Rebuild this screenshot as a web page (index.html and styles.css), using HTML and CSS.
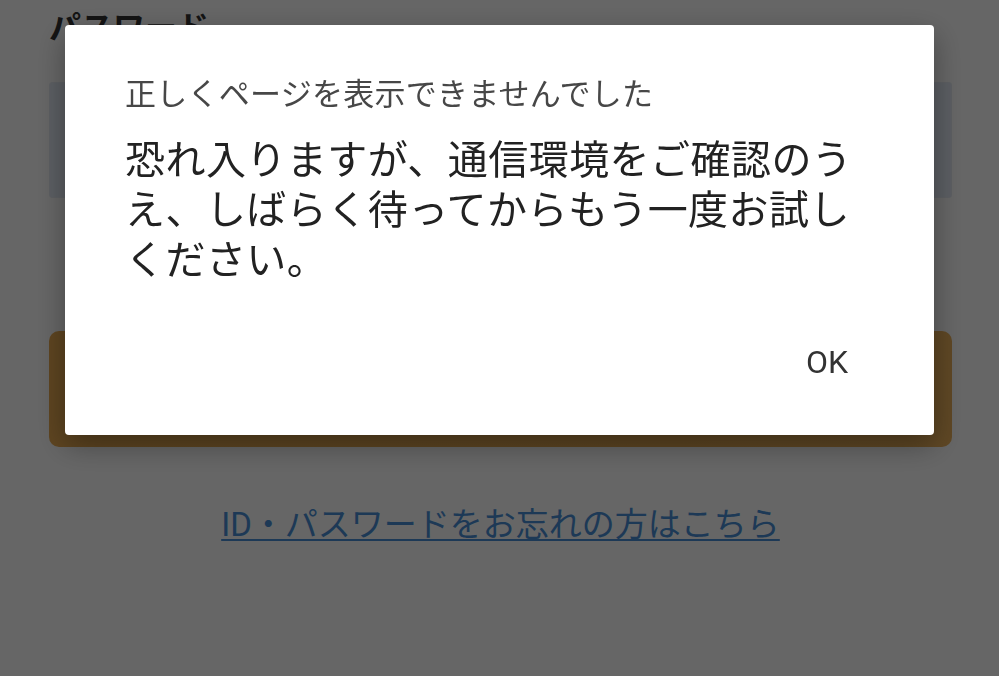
FILE: index.html
```html
<!DOCTYPE html>
<html lang="ja">
<head>
<meta charset="utf-8">
<title>ログイン</title>
<link rel="stylesheet" href="styles.css">
</head>
<body>
<main class="page">
  <h2 class="field-label">パスワード</h2>
  <div class="input-box"></div>
  <button class="login-btn" type="button"></button>
  <p class="forgot"><a href="#" class="forgot-link">ID・パスワードをお忘れの方はこちら</a></p>
</main>

<div class="scrim">
  <div class="dialog" role="alertdialog">
    <h1 class="dialog-title">正しくページを表示できませんでした</h1>
    <p class="dialog-message">恐れ入りますが、通信環境をご確認のうえ、しばらく待ってからもう一度お試しください。</p>
    <div class="dialog-actions">
      <button class="dialog-ok" type="button">OK</button>
    </div>
  </div>
</div>
</body>
</html>
```

FILE: styles.css
```css
html, body {
  margin: 0;
  padding: 0;
  background: #ffffff;
  font-family: "Noto Sans CJK JP", sans-serif;
}

.page {
  padding: 5px 47px 0 49px;
  display: flex;
  flex-direction: column;
}

.field-label {
  margin: 0;
  font-size: 32px;
  line-height: 40px;
  font-weight: 700;
  color: #333333;
}

.input-box {
  margin-top: 37px;
  height: 116px;
  box-sizing: border-box;
  background: #e4ebf7;
  border: 1px solid #e8edf5;
  border-radius: 3px;
}

.login-btn {
  margin-top: 133px;
  height: 116px;
  border: none;
  border-radius: 10px;
  background: linear-gradient(90deg, #e9ab52 0%, #e7ac55 70%, #ecb25c 100%);
}

.forgot {
  margin: 58px 0 0;
  text-align: center;
  font-family: Roboto, "Noto Sans CJK JP", sans-serif;
  font-size: 33px;
  line-height: 40px;
}

.forgot-link {
  color: #4a90d8;
  text-decoration: underline;
  text-decoration-thickness: 2px;
  text-underline-offset: 3px;
}

.scrim {
  position: fixed;
  inset: 0;
  background: rgba(0, 0, 0, 0.6);
  display: flex;
  justify-content: center;
  align-items: flex-start;
  padding-top: 25px;
}

.dialog {
  width: 869px;
  box-sizing: border-box;
  background: #ffffff;
  border-radius: 4px;
  padding: 47px 54px 0 60px;
  box-shadow: 0 10px 30px rgba(0, 0, 0, 0.35);
  display: flex;
  flex-direction: column;
}

.dialog-title {
  margin: 0;
  font-size: 31px;
  line-height: 40px;
  font-weight: 400;
  letter-spacing: 0.25px;
  color: #474747;
}

.dialog-message {
  margin: 20px 0 0;
  font-size: 40px;
  line-height: 50px;
  letter-spacing: 0.45px;
  color: #222222;
}

.dialog-actions {
  margin-top: 52px;
  padding: 0 32px 45px 0;
  display: flex;
  justify-content: flex-end;
}

.dialog-ok {
  border: none;
  background: transparent;
  padding: 0;
  font-family: Roboto, "Noto Sans CJK JP", sans-serif;
  font-size: 32px;
  line-height: 56px;
  color: #333333;
}
```
